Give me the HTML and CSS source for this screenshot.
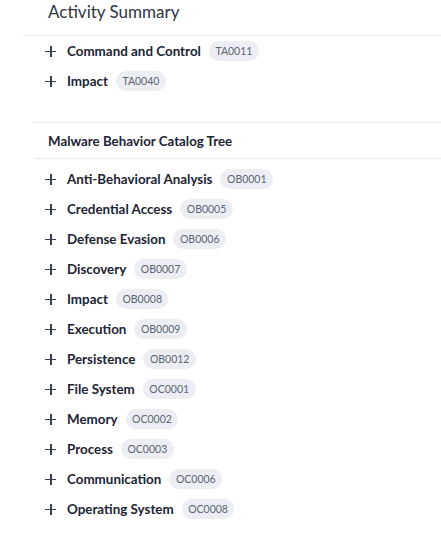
FILE: index.html
```html
<!DOCTYPE html>
<html>
<head>
<meta charset="utf-8">
<link rel="stylesheet" href="styles.css">
</head>
<body>
<section class="summary">
  <h1 class="title">Activity Summary</h1>
  <ul class="tree">
    <li class="row"><span class="plus"></span><span class="label">Command and Control</span><span class="badge">TA0011</span></li>
    <li class="row"><span class="plus"></span><span class="label">Impact</span><span class="badge">TA0040</span></li>
  </ul>
</section>
<section class="catalog">
  <h2 class="heading">Malware Behavior Catalog Tree</h2>
  <ul class="tree tree-catalog">
    <li class="row"><span class="plus"></span><span class="label">Anti-Behavioral Analysis</span><span class="badge">OB0001</span></li>
    <li class="row"><span class="plus"></span><span class="label">Credential Access</span><span class="badge">OB0005</span></li>
    <li class="row"><span class="plus"></span><span class="label">Defense Evasion</span><span class="badge">OB0006</span></li>
    <li class="row"><span class="plus"></span><span class="label">Discovery</span><span class="badge">OB0007</span></li>
    <li class="row"><span class="plus"></span><span class="label">Impact</span><span class="badge">OB0008</span></li>
    <li class="row"><span class="plus"></span><span class="label">Execution</span><span class="badge">OB0009</span></li>
    <li class="row"><span class="plus"></span><span class="label">Persistence</span><span class="badge">OB0012</span></li>
    <li class="row"><span class="plus"></span><span class="label">File System</span><span class="badge">OC0001</span></li>
    <li class="row"><span class="plus"></span><span class="label">Memory</span><span class="badge">OC0002</span></li>
    <li class="row"><span class="plus"></span><span class="label">Process</span><span class="badge">OC0003</span></li>
    <li class="row"><span class="plus"></span><span class="label">Communication</span><span class="badge">OC0006</span></li>
    <li class="row"><span class="plus"></span><span class="label">Operating System</span><span class="badge">OC0008</span></li>
  </ul>
</section>
</body>
</html>
```
FILE: styles.css
```css
html, body {
  margin: 0;
  padding: 0;
  background: #ffffff;
}
body {
  font-family: "Source Sans Pro", "Lato", "Liberation Sans", sans-serif;
  color: #1d2433;
}
.summary {
  margin-left: 23px;
}
.title {
  margin: 0;
  height: 36px;
  box-sizing: border-box;
  padding: 0 0 0 25px;
  font-size: 17px;
  line-height: 23px;
  font-weight: 400;
  color: #2f3542;
  border-bottom: 1px solid #e6e8ec;
}
.tree {
  list-style: none;
  margin: 0;
  padding: 0 0 0 22px;
}
.summary .tree {
  padding-bottom: 26px;
}
.row {
  height: 30px;
  display: flex;
  align-items: center;
}
.plus {
  position: relative;
  width: 11px;
  height: 11px;
  margin-right: 11px;
  flex: none;
}
.plus::before, .plus::after {
  content: "";
  position: absolute;
  background: #3a3f4a;
}
.plus::before {
  left: 0;
  right: 0;
  top: 5px;
  height: 1.5px;
}
.plus::after {
  top: 0;
  bottom: 0;
  left: 5px;
  width: 1.5px;
}
.label {
  font-size: 13.4px;
  font-weight: 700;
  color: #1d2433;
  margin-right: 8px;
}
.badge {
  font-size: 10.5px;
  height: 20px;
  line-height: 20px;
  padding: 0 6.5px;
  border-radius: 10px;
  background: #eceef3;
  color: #5d6573;
}
.catalog {
  margin-left: 34px;
}
.heading {
  margin: 0;
  height: 37px;
  box-sizing: border-box;
  padding-left: 14px;
  display: flex;
  align-items: center;
  font-size: 13.3px;
  font-weight: 700;
  color: #1d2433;
  border-top: 1px solid #e6e8ec;
  border-bottom: 1px solid #e6e8ec;
}
.tree-catalog {
  padding-left: 11px;
  padding-top: 5px;
}
```
